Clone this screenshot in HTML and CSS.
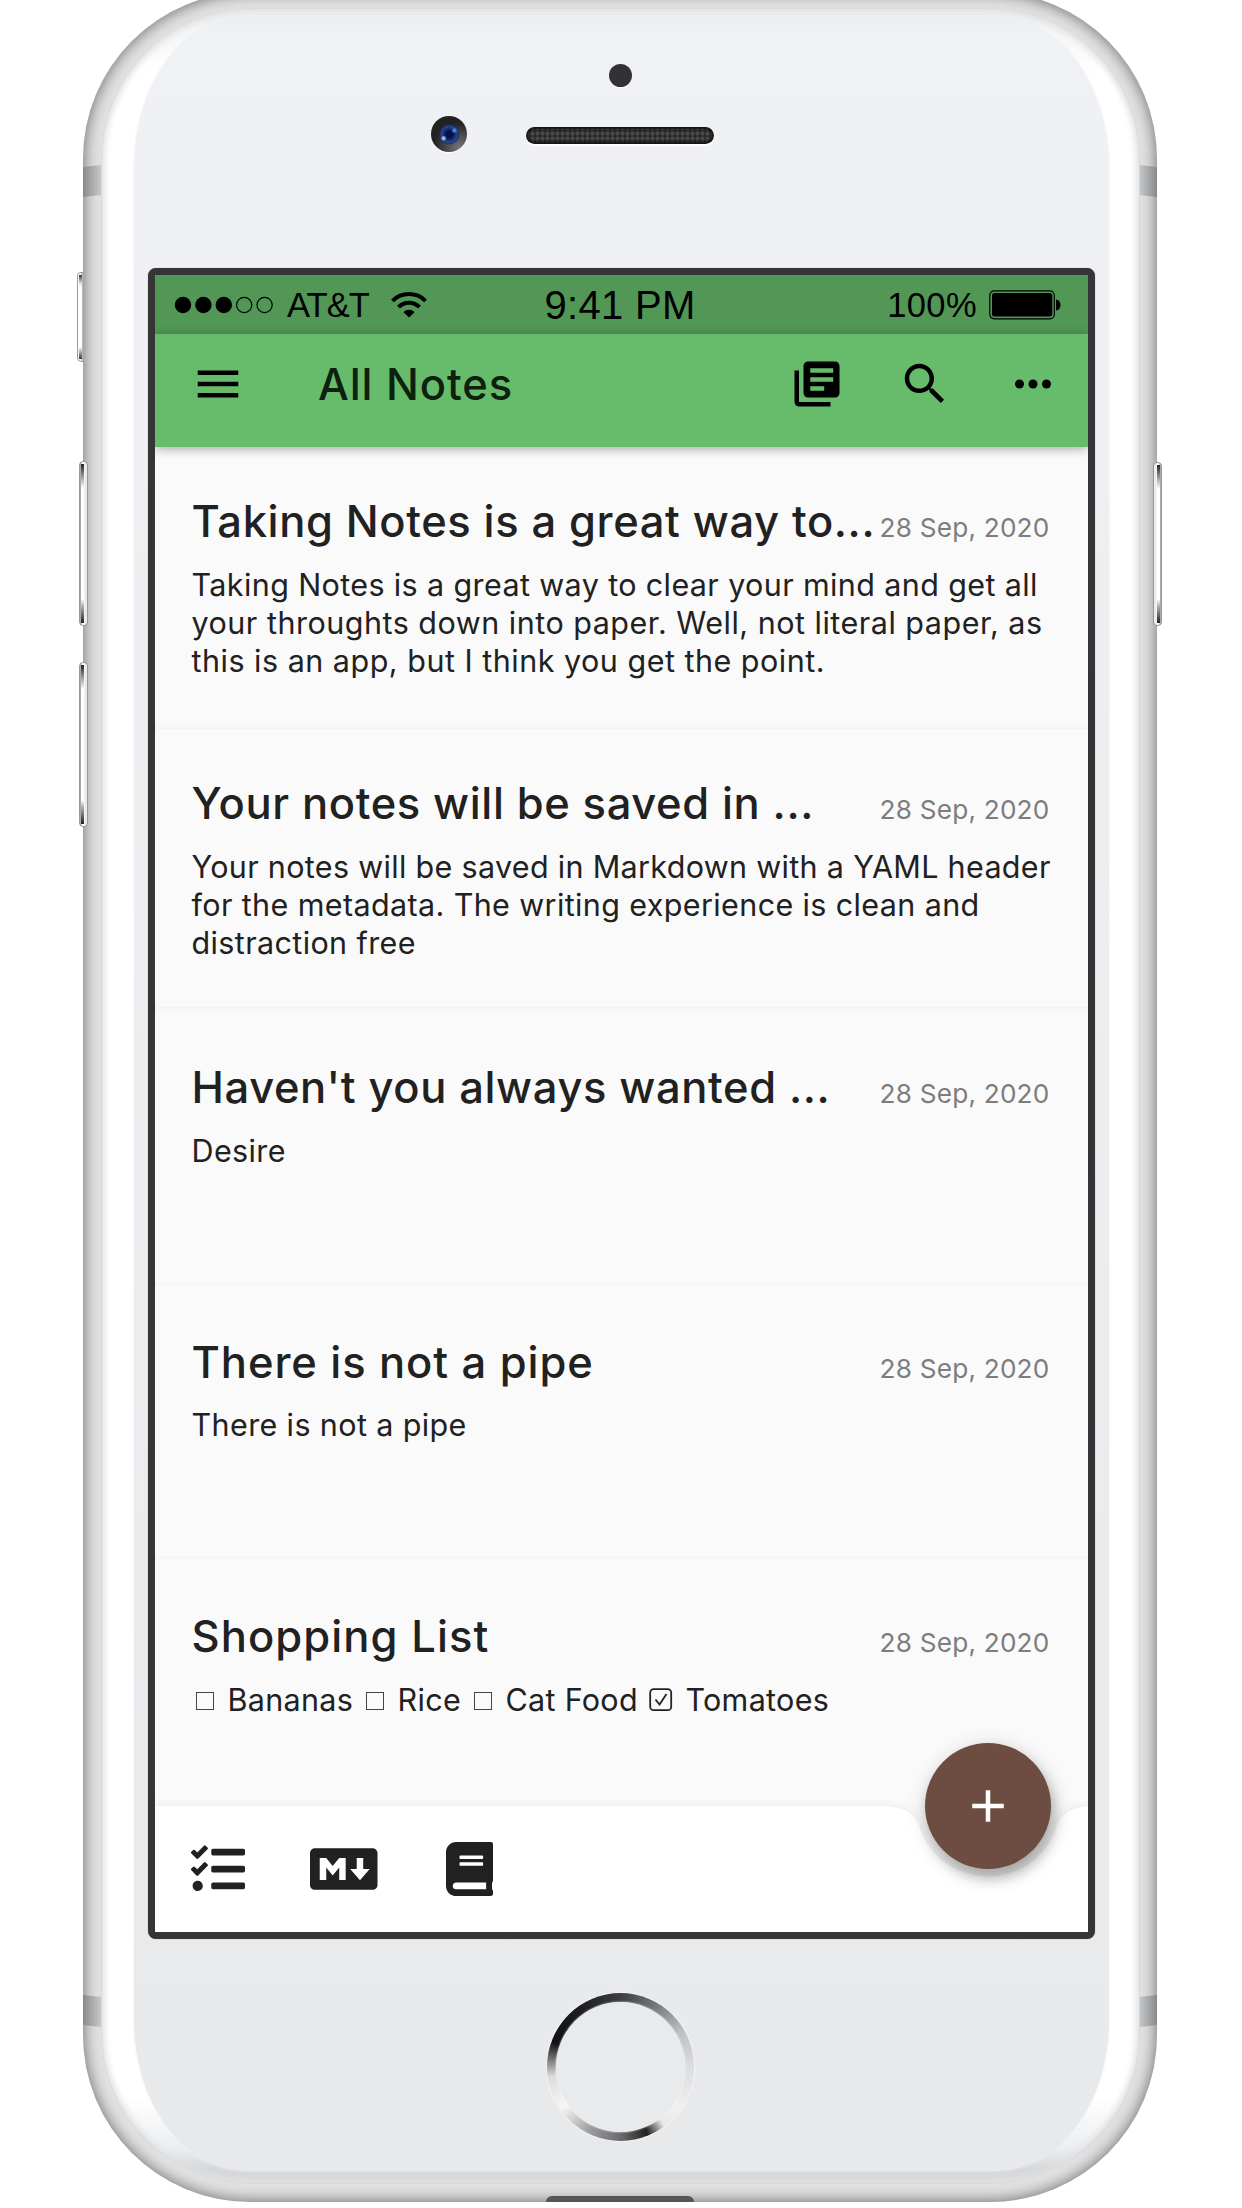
FILE: index.html
```html
<!DOCTYPE html>
<html lang="en">
<head>
<meta charset="utf-8">
<title>All Notes</title>
<link rel="stylesheet" href="styles.css">
</head>
<body>
<main class="stage">
  <span class="key key-mute"></span><span class="key key-up"></span><span class="key key-down"></span><span class="key key-power"></span>
  <div class="phone">
    <i class="band tl"></i><i class="band tr"></i><i class="band bl"></i><i class="band br"></i>
    <div class="glass"></div>
    <div class="face"></div>
    <span class="sensor"></span>
    <span class="camera"></span>
    <span class="speaker"></span>
    <span class="home"></span>
    <span class="port"></span>
  </div>

  <div class="screen">
    <div class="statusbar">
      <div class="carrier">
        <svg width="100" height="18" viewBox="0 0 100 18"><circle cx="9" cy="9" r="8.2"/><circle cx="29.4" cy="9" r="8.2"/><circle cx="49.8" cy="9" r="8.2"/><g fill="none" stroke="#000" stroke-width="1.2"><circle cx="70.2" cy="9" r="7.6"/><circle cx="90.6" cy="9" r="7.6"/></g></svg>
        <span class="net">AT&amp;T</span>
        <svg class="wifi" width="36" height="26" viewBox="0 0 36 26"><g fill="none" stroke="#000" stroke-width="4"><path d="M1.5 8.8C10.500 -.2 25.500 -.2 34.500 8.800"/><path d="M7.500 15.200C13.200 9.300 22.800 9.300 28.500 15.200"/></g><path d="M12.500 20.200C15.500 17 20.500 17 23.500 20.200L18 25.600Z"/></svg>
      </div>
      <span class="clock">9:41 PM</span>
      <div class="power">
        <span class="pct">100%</span>
        <svg width="73" height="30" viewBox="0 0 73 30"><rect x=".8" y=".8" width="64.500" height="28" rx="4.500" fill="none" stroke="#000" stroke-width="1.200"/><rect x="3" y="3" width="60.300" height="23.600" rx="2.500"/><path d="M67 9.500C73 10 73 20 67 20.500Z"/></svg>
      </div>
    </div>
    <header class="appbar">
      <svg class="icon" viewBox="0 0 24 24"><path d="M3 18h18v-2H3v2zm0-5h18v-2H3v2zm0-7v2h18V6H3z"/></svg>
      <h1>All Notes</h1>
      <svg class="icon" viewBox="0 0 24 24"><path d="M4 6H2v14c0 1.100.9 2 2 2h14v-2H4V6z"/><path fill-rule="evenodd" d="M20 2H8c-1.100 0-2 .9-2 2v12c0 1.100.9 2 2 2h12c1.100 0 2-.9 2-2V4c0-1.100-.9-2-2-2zM9 5h10.200v2H9zM9 9h10.200v2H9zM9 13h6.200v2H9z"/></svg>
      <svg class="icon" viewBox="0 0 24 24"><path d="M15.500 14h-.79l-.28-.27C15.410 12.590 16 11.110 16 9.500 16 5.910 13.090 3 9.500 3S3 5.910 3 9.500 5.910 16 9.500 16c1.610 0 3.090-.59 4.230-1.570l.27.28v.79l5 4.990L20.490 19l-4.990-5zm-6 0C7.010 14 5 11.990 5 9.500S7.010 5 9.500 5 14 7.010 14 9.500 11.990 14 9.500 14z"/></svg>
      <svg class="icon" viewBox="0 0 24 24"><circle cx="6" cy="12" r="2"/><circle cx="12" cy="12" r="2"/><circle cx="18" cy="12" r="2"/></svg>
    </header>

    <section class="list">
      <article class="note">
        <div class="head"><h2>Taking Notes is a great way to...</h2><time>28 Sep, 2020</time></div>
        <p>Taking Notes is a great way to clear your mind and get all<br><span class="loose">your throughts down into paper. Well, not literal paper, as</span><br><span class="loose">this is an app, but I think you get the point.</span></p>
      </article>
      <article class="note">
        <div class="head"><h2>Your notes will be saved in ...</h2><time>28 Sep, 2020</time></div>
        <p><span class="snug">Your notes will be saved in Markdown with a YAML header</span><br>for the metadata. The writing experience is clean and<br>distraction free</p>
      </article>
      <article class="note short">
        <div class="head"><h2>Haven't you always wanted ...</h2><time>28 Sep, 2020</time></div>
        <p>Desire</p>
      </article>
      <article class="note short">
        <div class="head"><h2 class="wide">There is not a pipe</h2><time>28 Sep, 2020</time></div>
        <p>There is not a pipe</p>
      </article>
      <article class="note short">
        <div class="head"><h2 class="wider">Shopping List</h2><time>28 Sep, 2020</time></div>
        <p class="checks"><i class="box"></i><span>Bananas</span><i class="box"></i><span>Rice</span><i class="box"></i><span>Cat Food</span><svg class="ticked" viewBox="0 0 24 24"><rect x="1.200" y="1.200" width="21" height="21" rx="3.500"/><path d="M6.500 11.500l4 5 7-10.500"/></svg><span>Tomatoes</span></p>
      </article>
    </section>

    <footer class="bottombar">
      <svg class="barshape" viewBox="0 0 932 127"><path d="M0 0H722C748 0 759 6 764 19A72 72 0 0 0 902 19C906 8 917 0 940 0V140H0Z"/></svg>
      <svg class="tool tasks" viewBox="0 0 512 512"><path d="M139.610 35.500a12 12 0 0 0-17 0L58.930 98.810l-22.700-22.120a12 12 0 0 0-17 0L3.530 92.410a12 12 0 0 0 0 17l47.590 47.400a12.780 12.780 0 0 0 17.610 0l15.590-15.620L156.520 69a12.090 12.090 0 0 0 .09-17zm0 159.190a12 12 0 0 0-17 0l-63.680 63.720-22.700-22.100a12 12 0 0 0-17 0L3.530 252a12 12 0 0 0 0 17L51 316.500a12.770 12.770 0 0 0 17.600 0l15.700-15.690 72.200-72.220a12 12 0 0 0 .09-16.900zM64 368c-26.490 0-48.590 21.500-48.590 48S37.530 464 64 464a48 48 0 0 0 0-96zm432 16H208a16 16 0 0 0-16 16v32a16 16 0 0 0 16 16h288a16 16 0 0 0 16-16v-32a16 16 0 0 0-16-16zm0-320H208a16 16 0 0 0-16 16v32a16 16 0 0 0 16 16h288a16 16 0 0 0 16-16V80a16 16 0 0 0-16-16zm0 160H208a16 16 0 0 0-16 16v32a16 16 0 0 0 16 16h288a16 16 0 0 0 16-16v-32a16 16 0 0 0-16-16z"/></svg>
      <svg class="tool markdown" viewBox="0 0 640 512"><path d="M593.800 59.100H46.200C20.700 59.100 0 79.800 0 105.200v301.500c0 25.500 20.700 46.200 46.200 46.200h547.700c25.500 0 46.200-20.700 46.100-46.100V105.200c0-25.400-20.700-46.100-46.200-46.100zM338.500 360.600H277v-120l-61.500 76.900-61.500-76.900v120H92.300V151.400h61.500l61.500 76.900 61.500-76.900h61.500v209.200zm135.300 3.100L381.500 256H443V151.400h61.500V256H566z"/></svg>
      <svg class="tool book" viewBox="0 0 448 512"><path d="M448 360V24c0-13.300-10.700-24-24-24H96C43 0 0 43 0 96v320c0 53 43 96 96 96h328c13.300 0 24-10.700 24-24v-16c0-7.500-3.500-14.300-8.900-18.700-4.200-15.400-4.200-59.300 0-74.700 5.400-4.300 8.900-11.100 8.900-18.600zM128 134c0-3.300 2.700-6 6-6h212c3.300 0 6 2.700 6 6v20c0 3.300-2.700 6-6 6H134c-3.300 0-6-2.700-6-6v-20zm0 64c0-3.300 2.700-6 6-6h212c3.300 0 6 2.700 6 6v20c0 3.300-2.700 6-6 6H134c-3.300 0-6-2.700-6-6v-20zm253.400 250H96c-17.700 0-32-14.300-32-32 0-17.600 14.400-32 32-32h285.400c-1.900 17.100-1.900 46.900 0 64z"/></svg>
      <button class="fab" aria-label="New note"><svg viewBox="0 0 24 24"><path d="M19 13h-6v6h-2v-6H5v-2h6V5h2v6h6v2z"/></svg></button>
    </footer>
  </div>
</main>
</body>
</html>
```
FILE: styles.css
```css
* { box-sizing: border-box; }
body { margin: 0; background: #fff; font-family: Inter, "Liberation Sans", sans-serif; color: #212121; }
.stage { position: relative; width: 1242px; height: 2208px; overflow: hidden; padding: 268px 0 0 148px; }

/* Device shell */
.phone { position: absolute; left: 83px; top: -8px; width: 1074px; height: 2210px; border-radius: 167px; background: #e2e2e2; box-shadow: inset 0 0 15px 1px #6e706f; overflow: hidden; }
.band { position: absolute; width: 18px; height: 32px; background: linear-gradient(90deg, #88898b, #a8aaac 50%, #c8c9cb); }
.tl, .bl { left: 0; }
.tr, .br { right: 0; transform: scaleX(-1); }
.tl, .tr { top: 173px; clip-path: polygon(0 2px, 100% 0, 100% 30px, 0 100%); }
.bl, .br { top: 2003px; clip-path: polygon(0 0, 100% 2px, 100% 100%, 0 30px); }
.glass { position: absolute; left: 18px; right: 17px; top: 16px; bottom: 18px; border-radius: 150px; background: linear-gradient(#eceef0, #fff 60px, #fff 2090px, #eceef0 2140px, #d5d6d8 2162px, #d8d9da); box-shadow: inset 0 0 0 1px #d8d9db, inset 0 0 6px 4px #dfe1e3; }
.face { position: absolute; left: 51px; right: 48px; top: 24px; bottom: 31px; border-radius: 112px / 150px; background: linear-gradient(#eceef0, #f0f1f3 16px, #eff0f3 250px, #e9eaec 1900px, #e8e9eb); box-shadow: 0 0 3px #f0f1f3; }
.sensor { position: absolute; left: 526px; top: 71.500px; width: 23px; height: 23px; border-radius: 50%; background: #323234; box-shadow: 0 1px 1px #fff; }
.camera { position: absolute; left: 348px; top: 124px; width: 36px; height: 36px; border-radius: 50%; background: radial-gradient(circle at 35% 62%, #9fc0f0 0 1px, transparent 3px), radial-gradient(circle at 65% 40%, #4b86d6 0 1px, transparent 3px), radial-gradient(circle at 51% 51%, #03104a 0 3px, #2b4795 8px, #1e3066 9px, transparent 10.500px), radial-gradient(circle at 80% 90%, #777, #222 60%); box-shadow: 0 1px 1px #fff; }
.speaker { position: absolute; left: 443px; top: 134.500px; width: 188px; height: 17px; border-radius: 9px; background: repeating-linear-gradient(90deg, #0000 0 3px, #1116 3px 5px), repeating-linear-gradient(#4a4a4a 0 3px, #363636 3px 5px); box-shadow: inset 0 0 3px 2px #0c0f0f, 0 2px 2px #fff; }
.home { position: absolute; left: 464px; top: 2001px; width: 147px; height: 148px; border-radius: 50%; background: conic-gradient(#3c3d3f, #77797b 30deg, #bfc0c2 60deg, #dcdddf 90deg, #f0f0f0 125deg, #e8e8e8 143deg, #222 158deg, #6a6b6d 180deg, #9a9b9c 205deg, #f6f6f6 235deg, #ddd 262deg, #77787a 276deg, #111214 290deg, #1c1d1f 325deg, #3c3d3f); box-shadow: 0 0 1px 1px #f3f3f4; }
.home::after { content: ""; position: absolute; inset: 9px; border-radius: 50%; background: #e9eaec; box-shadow: 0 0 2px #fff; }
.port { position: absolute; left: 463px; bottom: 0; width: 148px; height: 6px; border-radius: 8px 8px 0 0; background: #555; }

.key { position: absolute; border-radius: 4px; border: 1px solid #999; background: linear-gradient(90deg, #aaa 0 1px, #fff 2px 4px, #e6e7ea 5px, #f0f1f3 8px, #bbb); }
.key::before { content: ""; position: absolute; left: 1px; top: 2px; bottom: 2px; width: 3px; background: linear-gradient(#222, #bbb 16px, #fff 24px, #fff calc(100% - 24px), #bbb calc(100% - 18px), #222); }
.key-mute { left: 77px; top: 272px; width: 10px; height: 90px; background: linear-gradient(90deg, #fff 3px, #b7b8ba 4px); }
.key-mute::before { background: linear-gradient(#333, #ddd 8px, #fff 12px, #fff calc(100% - 12px), #333); }
.key-up, .key-down { left: 79px; width: 9px; height: 165px; z-index: 1; }
.key-up { top: 461px; }
.key-down { top: 662px; }
.key-power { left: 1153px; top: 462px; width: 9px; height: 164px; z-index: 1; transform: scaleX(-1); }

/* App */
.screen { position: relative; width: 946.500px; height: 1671px; border: 7px solid #353535; border-radius: 8px; background: #fafafa; display: flex; flex-direction: column; overflow: hidden; box-shadow: 0 0 1px #777; }
.statusbar { flex: none; height: 59px; background: #529755; color: #000; display: grid; grid-template-columns: 1fr auto 1fr; align-items: center; padding: 0 25.500px 0 19px; font-family: "Liberation Sans", Arial, sans-serif; font-size: 34.500px; line-height: 40px; }
.carrier, .power { display: flex; align-items: center; }
.net { margin-left: 13px; letter-spacing: -.9px; }
.wifi { margin-left: 22px; }
.clock { font-size: 40px; letter-spacing: .3px; padding-left: 4px; }
.power { justify-content: flex-end; gap: 12px; }
.pct { letter-spacing: .4px; }
.appbar { flex: none; height: 113px; background: #67bc6b; display: flex; align-items: center; padding: 0 27.500px 13px 36px; box-shadow: 0 2px 10px #0005; z-index: 1; gap: 54px; }
.icon { width: 54px; height: 54px; fill: #000; flex: none; }
.appbar h1 { flex: 1; margin: 0 0 0 19px; font-weight: 500; font-size: 43.500px; line-height: 54px; letter-spacing: .9px; color: #0d210e; white-space: nowrap; }

.list { flex: 1; min-height: 0; overflow: hidden; }
.note { height: 281px; padding: 45px 38px 0 36.500px; border-bottom: 3px double #f3f3f3; }
.note:first-child { height: 282px; }
.note.short { height: 274.500px; padding-top: 48px; }
.head { display: flex; justify-content: space-between; align-items: baseline; height: 60px; white-space: nowrap; }
h2 { margin: 0; font-weight: 500; font-size: 43.500px; line-height: 58px; letter-spacing: .62px; }
h2.wide { letter-spacing: .92px; }
h2.wider { letter-spacing: 1.080px; }
time { font-size: 26.200px; font-weight: 400; color: #7d7d7d; letter-spacing: .2px; }
.note p { margin: 13.500px 0 0; font-size: 30.500px; line-height: 38.300px; letter-spacing: .38px; white-space: nowrap; }
.note p .loose { letter-spacing: .5px; }
.note p .snug { letter-spacing: .32px; }
.note .checks { display: flex; align-items: center; letter-spacing: .3px; }
.box { width: 18px; height: 18px; border: 1.500px solid #444; margin: 3px 14px 0 4px; }
.checks span { margin-right: 8.500px; }
.ticked { width: 24px; height: 24px; margin: 0 12px 0 3px; fill: none; stroke: #222; stroke-width: 1.800; }

.bottombar { flex: none; height: 126px; position: relative; display: flex; align-items: center; padding: 0 36px; }
.barshape { position: absolute; left: 0; top: 0; width: 932px; height: 127px; overflow: visible; fill: #fff; filter: drop-shadow(0 -1px 5px #0001); }
.tool { position: relative; height: 54px; fill: #212121; }
.tasks { width: 54px; }
.markdown { width: 67.500px; margin-left: 65px; }
.book { width: 47.250px; margin-left: 68.500px; }
.fab { position: absolute; left: 770px; top: -63px; width: 126px; height: 126px; border: 0; padding: 0; border-radius: 50%; background: #6d4c41; display: grid; place-items: center; box-shadow: 3px 9px 14px #0004, 2px 4px 24px #0002; }
.fab svg { width: 54px; height: 54px; fill: #fff; }
```
